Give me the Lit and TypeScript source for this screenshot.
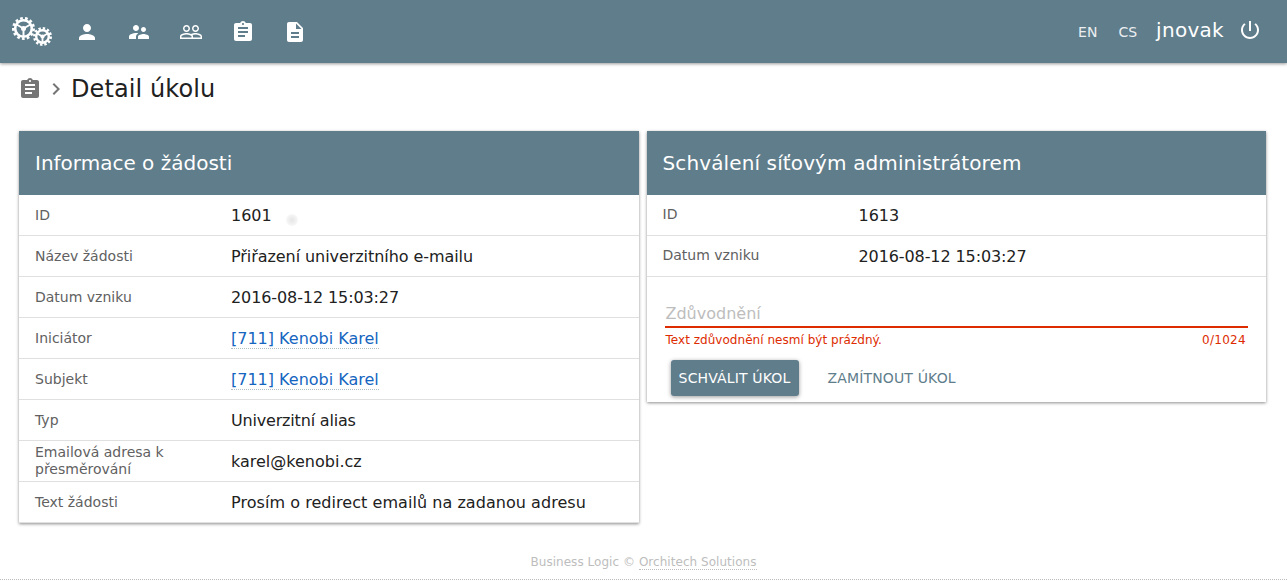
import { LitElement, html, css, svg } from "lit";
import { customElement } from "lit/decorators.js";

const P = {
  person: "M12 12c2.21 0 4-1.79 4-4s-1.79-4-4-4-4 1.79-4 4 1.79 4 4 4zm0 2c-2.67 0-8 1.34-8 4v2h16v-2c0-2.66-5.33-4-8-4z",
  sup: "M16.5 12c1.38 0 2.49-1.12 2.49-2.5S17.88 7 16.5 7C15.12 7 14 8.12 14 9.5s1.12 2.5 2.5 2.5zM9 11c1.66 0 2.99-1.34 2.99-3S10.66 5 9 5C7.34 5 6 6.34 6 8s1.34 3 3 3zm7.5 3c-1.83 0-5.5.92-5.5 2.75V19h11v-2.25c0-1.83-3.67-2.75-5.5-2.75zM9 13c-2.33 0-7 1.17-7 3.5V19h7v-2.25c0-.85.33-2.34 2.37-3.47C10.5 13.1 9.66 13 9 13z",
  people: "M16.5 13c-1.2 0-3.07.34-4.5 1-1.43-.67-3.3-1-4.5-1C5.33 13 1 14.08 1 16.25V19h22v-2.75c0-2.17-4.33-3.25-6.5-3.25zm-4 4.5h-10v-1.25c0-.54 2.56-1.75 5-1.75s5 1.21 5 1.75v1.25zm9 0H14v-1.25c0-.46-.2-.86-.52-1.22.88-.3 1.96-.53 3.02-.53 2.44 0 5 1.21 5 1.75v1.25zM7.5 12c1.93 0 3.5-1.57 3.5-3.5S9.43 5 7.5 5 4 6.57 4 8.5 5.57 12 7.5 12zm0-5.5c1.1 0 2 .9 2 2s-.9 2-2 2-2-.9-2-2 .9-2 2-2zm9 5.5c1.93 0 3.5-1.57 3.5-3.5S18.43 5 16.5 5 13 6.57 13 8.5s1.57 3.5 3.5 3.5zm0-5.5c1.1 0 2 .9 2 2s-.9 2-2 2-2-.9-2-2 .9-2 2-2z",
  assign: "M19 3h-4.18C14.4 1.84 13.3 1 12 1c-1.3 0-2.4.84-2.82 2H5c-1.1 0-2 .9-2 2v14c0 1.1.9 2 2 2h14c1.1 0 2-.9 2-2V5c0-1.1-.9-2-2-2zm-7 0c.55 0 1 .45 1 1s-.45 1-1 1-1-.45-1-1 .45-1 1-1zm2 14H7v-2h7v2zm3-4H7v-2h10v2zm0-4H7V7h10v2z",
  desc: "M14 2H6c-1.1 0-1.99.9-1.99 2L4 20c0 1.1.89 2 1.99 2H18c1.1 0 2-.9 2-2V8l-6-6zm2 16H8v-2h8v2zm0-4H8v-2h8v2zm-3-5V3.5L18.5 9H13z",
  power: "M13 3h-2v10h2V3zm4.83 2.17l-1.42 1.42C17.99 7.86 19 9.81 19 12c0 3.87-3.13 7-7 7s-7-3.13-7-7c0-2.19 1.01-4.14 2.58-5.42L6.17 5.17C4.23 6.82 3 9.26 3 12c0 4.97 4.03 9 9 9s9-4.03 9-9c0-2.74-1.23-5.18-3.17-6.83z",
  chev: "M10 6L8.59 7.41 13.17 12l-4.58 4.59L10 18l6-6z",
};

const icon = (d: string, cls = "ic") =>
  html`<svg class=${cls} viewBox="0 0 24 24" fill="currentColor"><path d=${d}></path></svg>`;

const gear = (cx: number, cy: number, R: number, n: number, t: number) => {
  const tr = R - 1.3;
  const circ = 2 * Math.PI * tr;
  const spokes = [90, 210, 330].map((a) => {
    const rad = (a * Math.PI) / 180;
    return svg`<line x1=${cx} y1=${cy} x2=${cx + Math.cos(rad) * (R - 3)} y2=${cy + Math.sin(rad) * (R - 3)} stroke="#fff" stroke-width=${t}></line>`;
  });
  return svg`
    <circle cx=${cx} cy=${cy} r=${tr} fill="none" stroke="#fff" stroke-width="2.6" stroke-dasharray="${(circ / n) * 0.55} ${(circ / n) * 0.45}"></circle>
    <circle cx=${cx} cy=${cy} r=${R - 3.2} fill="none" stroke="#fff" stroke-width=${t + 0.6}></circle>
    ${spokes}
    <circle cx=${cx} cy=${cy} r=${R * 0.22} fill="#fff"></circle>`;
};

type Row = { l: string; v: string; link?: boolean; track?: number };

const LEFT: Row[] = [
  { l: "ID", v: "1601" },
  { l: "Název žádosti", v: "Přiřazení univerzitního e-mailu", track: -0.065 },
  { l: "Datum vzniku", v: "2016-08-12 15:03:27", track: -0.1 },
  { l: "Iniciátor", v: "[711] Kenobi Karel", link: true },
  { l: "Subjekt", v: "[711] Kenobi Karel", link: true },
  { l: "Typ", v: "Univerzitní alias", track: -0.18 },
  { l: "Emailová adresa k přesměrování", v: "karel@kenobi.cz" },
  { l: "Text žádosti", v: "Prosím o redirect emailů na zadanou adresu", track: 0.05 },
];
const RIGHT: Row[] = [
  { l: "ID", v: "1613" },
  { l: "Datum vzniku", v: "2016-08-12 15:03:27", track: -0.1 },
];

@customElement("app-root")
export class AppRoot extends LitElement {
  static styles = css`
    :host {
      display: flex;
      flex-direction: column;
      height: 581px;
      overflow: hidden;
      font-family: "DejaVu Sans", sans-serif;
      color: #212121;
      background: #fff;
      position: relative;
    }
    .top {
      height: 63px;
      flex: none;
      background: #607d8b;
      box-shadow: 0 1px 3px rgba(0, 0, 0, 0.4);
      color: #fff;
      display: flex;
      align-items: center;
      padding: 0 25px 0 12px;
      position: relative;
      z-index: 1;
    }
    .logo {
      width: 42px;
      height: 32px;
      flex: none;
      margin-top: -1px;
    }
    .ic {
      width: 24px;
      height: 24px;
      flex: none;
      display: block;
    }
    .nav {
      display: flex;
      gap: 28px;
      margin-left: 21px;
      margin-top: 1px;
    }
    .spacer {
      flex: 1;
    }
    .lang {
      font-size: 14px;
      color: #eceff1;
      margin-top: 1px;
    }
    .en {
      margin-right: 21px;
    }
    .cs {
      margin-right: 19px;
    }
    .user {
      font-size: 20px;
      letter-spacing: 0.3px;
      margin-right: 14px;
      margin-top: -3px;
    }
    .power {
      margin-top: -3px;
    }
    .crumb {
      height: 50px;
      box-sizing: border-box;
      padding: 2px 0 0 18px;
      flex: none;
      display: flex;
      align-items: center;
      color: #757575;
    }
    .crumb .chev {
      width: 24px;
      height: 24px;
      margin-left: 2px;
    }
    .crumb h1 {
      margin: 0 0 0 3px;
      font-size: 24px;
      font-weight: 400;
      letter-spacing: 0.1px;
      color: #212121;
    }
    .cols {
      display: flex;
      align-items: flex-start;
      gap: 8px;
      padding: 18px 21px 0 19px;
    }
    .card {
      flex: 1 1 0;
      background: #fff;
      box-shadow: 0 1px 3px rgba(0, 0, 0, 0.45);
      position: relative;
    }
    .head {
      height: 64px;
      background: #607d8b;
      color: #fff;
      font-size: 20px;
      display: flex;
      align-items: center;
      padding-left: 16px;
    }
    .side .head {
      letter-spacing: 0.12px;
    }
    .row {
      height: 41px;
      box-sizing: border-box;
      border-bottom: 1px solid #e0e0e0;
      display: flex;
      align-items: center;
      padding-left: 16px;
    }
    .row:last-child {
      border-bottom: 0;
    }
    .label {
      width: 196px;
      flex: none;
      font-size: 14px;
      line-height: 17px;
      color: #616161;
      box-sizing: border-box;
      padding-right: 16px;
    }
    .side .label {
      margin-top: -2px;
    }
    .val {
      font-size: 16px;
    }
    a {
      color: #1565c0;
      text-decoration: none;
      border-bottom: 1px dotted #b0bec5;
    }
    .form {
      padding: 24px 18px 6px;
    }
    .input {
      height: 25px;
      border-bottom: 2px solid #dd2c00;
      font-size: 16px;
      line-height: 25px;
      color: #bdbdbd;
      padding-left: 1px;
    }
    .hint {
      display: flex;
      justify-content: space-between;
      font-size: 12px;
      color: #dd2c00;
      line-height: 14px;
      padding: 5px 2px 0 0;
      margin-left: 0;
    }
    .msg {
      padding-left: 1px;
      letter-spacing: 0.03px;
    }
    .count {
      letter-spacing: 0.3px;
    }
    .btns {
      display: flex;
      align-items: center;
      margin: 13px 0 0 6px;
    }
    .btn {
      height: 36px;
      box-sizing: border-box;
      padding: 0 8px;
      display: flex;
      align-items: center;
      font-size: 14px;
      letter-spacing: 0.15px;
      border-radius: 3px;
      color: #607d8b;
    }
    .btn.pri {
      width: 128px;
      justify-content: center;
      background: #607d8b;
      color: #fff;
      box-shadow: 0 1px 4px rgba(0, 0, 0, 0.4);
      margin-right: 21px;
    }
    .foot {
      position: absolute;
      left: 0;
      right: 0;
      top: 554px;
      height: 26px;
      box-sizing: border-box;
      border-bottom: 1px dotted #bdbdbd;
      text-align: center;
      font-size: 12px;
      line-height: 16px;
      letter-spacing: 0.04px;
      color: #bdbdbd;
    }
    .foot a {
      color: #bdbdbd;
      border-bottom: 1px dotted #bdbdbd;
    }
    .blot {
      position: absolute;
      left: 267px;
      top: 83px;
      width: 12px;
      height: 12px;
      border-radius: 50%;
      background: radial-gradient(circle, rgba(0, 0, 0, 0.1), rgba(0, 0, 0, 0));
    }
  `;

  private row(r: Row) {
    const style = r.track ? `letter-spacing:${r.track}px` : "";
    return html`<div class="row">
      <div class="label">${r.l}</div>
      <div class="val" style=${style}>${r.link ? html`<a href="#">${r.v}</a>` : r.v}</div>
    </div>`;
  }

  render() {
    return html`
      <div class="top">
        <svg class="logo" viewBox="0 0 42 32">${gear(11.5, 13.5, 11.5, 13, 2)}${gear(30.5, 21.5, 9.5, 12, 1.8)}</svg>
        <div class="nav">
          ${icon(P.person)}${icon(P.sup)}${icon(P.people)}${icon(P.assign)}${icon(P.desc)}
        </div>
        <div class="spacer"></div>
        <span class="lang en">EN</span>
        <span class="lang cs">CS</span>
        <span class="user">jnovak</span>
        ${icon(P.power, "ic power")}
      </div>
      <div class="crumb">
        ${icon(P.assign)}${icon(P.chev, "ic chev")}
        <h1>Detail úkolu</h1>
      </div>
      <div class="cols">
        <section class="card">
          <div class="head">Informace o žádosti</div>
          ${LEFT.map((r) => this.row(r))}
          <div class="blot"></div>
        </section>
        <section class="card side">
          <div class="head">Schválení síťovým administrátorem</div>
          ${RIGHT.map((r) => this.row(r))}
          <div class="form">
            <div class="input">Zdůvodnění</div>
            <div class="hint"><span class="msg">Text zdůvodnění nesmí být prázdný.</span><span class="count">0/1024</span></div>
            <div class="btns">
              <div class="btn pri">SCHVÁLIT ÚKOL</div>
              <div class="btn">ZAMÍTNOUT ÚKOL</div>
            </div>
          </div>
        </section>
      </div>
      <div class="foot">Business Logic © <a href="#">Orchitech Solutions</a></div>
    `;
  }
}
